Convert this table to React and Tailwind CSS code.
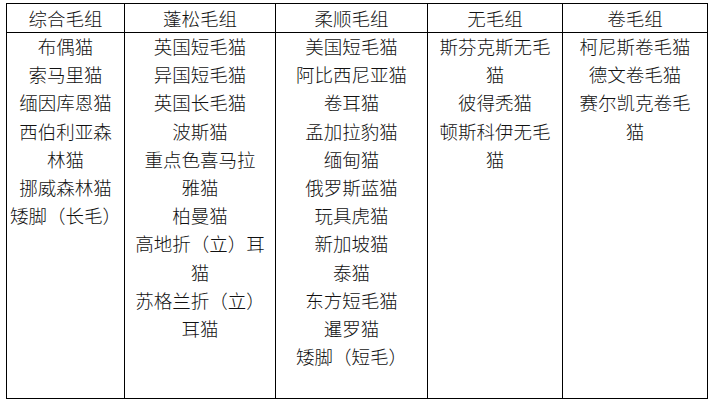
import React from 'react'

const columns = [
  { title: '综合毛组', w: 'w-[118px]', lines: ['布偶猫', '索马里猫', '缅因库恩猫', '西伯利亚森', '林猫', '挪威森林猫', '矮脚（长毛）'] },
  { title: '蓬松毛组', w: 'w-[151px]', lines: ['英国短毛猫', '异国短毛猫', '英国长毛猫', '波斯猫', '重点色喜马拉', '雅猫', '柏曼猫', '高地折（立）耳', '猫', '苏格兰折（立）', '耳猫'] },
  { title: '柔顺毛组', w: 'w-[152px]', lines: ['美国短毛猫', '阿比西尼亚猫', '卷耳猫', '孟加拉豹猫', '缅甸猫', '俄罗斯蓝猫', '玩具虎猫', '新加坡猫', '泰猫', '东方短毛猫', '暹罗猫', '矮脚（短毛）'] },
  { title: '无毛组', w: 'w-[135px]', lines: ['斯芬克斯无毛', '猫', '彼得秃猫', '顿斯科伊无毛', '猫'] },
  { title: '卷毛组', w: 'w-[145px]', lines: ['柯尼斯卷毛猫', '德文卷毛猫', '赛尔凯克卷毛', '猫'] },
]

export default function App() {
  return (
    <div className="bg-white w-[714px] h-[403px] pt-[3px] pl-[6px] text-[#111] font-light font-['Noto_Sans_CJK_SC',sans-serif]">
      <table className="table-fixed border-collapse w-[701px]">
        <thead>
          <tr className="h-[29px]">
            {columns.map((c) => (
              <th key={c.title} className={`${c.w} border-[1.5px] border-black font-light text-[18.5px] leading-[26px] text-center p-0 pb-[1px]`}>
                {c.title}
              </th>
            ))}
          </tr>
        </thead>
        <tbody>
          <tr className="h-[366px]">
            {columns.map((c) => (
              <td key={c.title} className="border-[1.5px] border-black align-top text-center p-0 -translate-y-[1px]">
                {c.lines.map((l, i) => (
                  <div key={i} className="whitespace-nowrap text-[18.5px] leading-[28.2px] -mt-[0px]">{l}</div>
                ))}
              </td>
            ))}
          </tr>
        </tbody>
      </table>
    </div>
  )
}
